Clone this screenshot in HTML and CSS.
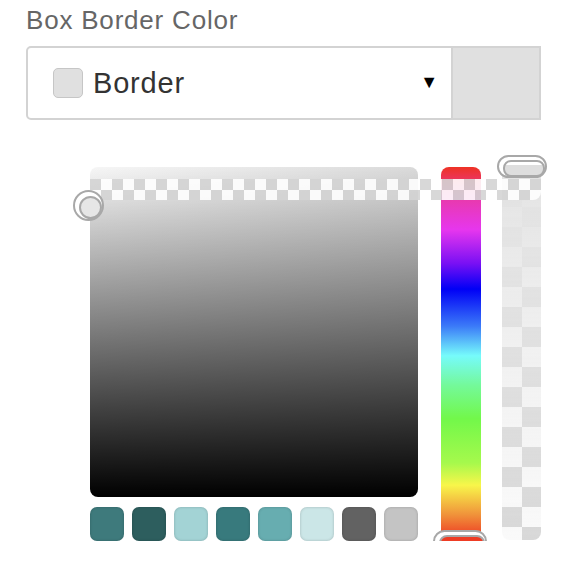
FILE: index.html
```html
<!DOCTYPE html>
<html lang="en">
<head>
    <meta charset="UTF-8">
    <meta name="viewport" content="width=device-width, initial-scale=1.0">
    <title>Box Border Color</title>
    <link rel="stylesheet" href="styles.css">
</head>
<body>
    <div class="field">
        <h2 class="label">Box Border Color</h2>

        <div class="color-input">
            <div class="select">
                <span class="chip"></span>
                <span class="select-text">Border</span>
                <span class="caret">&#9660;</span>
            </div>
            <div class="preview"></div>
        </div>

        <div class="picker">
            <div class="sv-col">
                <div class="sv"></div>
                <div class="swatches">
                    <span class="swatch s1"></span>
                    <span class="swatch s2"></span>
                    <span class="swatch s3"></span>
                    <span class="swatch s4"></span>
                    <span class="swatch s5"></span>
                    <span class="swatch s6"></span>
                    <span class="swatch s7"></span>
                    <span class="swatch s8"></span>
                </div>
            </div>
            <div class="hue"></div>
            <div class="alpha"></div>

            <div class="strip"></div>
            <div class="sv-handle"></div>
            <div class="pill hue-handle"></div>
            <div class="pill alpha-handle"></div>
        </div>
    </div>
</body>
</html>
```

FILE: styles.css
```css
* {
    margin: 0;
    padding: 0;
    box-sizing: border-box;
}

body {
    font-family: 'Liberation Sans', Arial, sans-serif;
    background: #fff;
    padding: 0 25px 0 26px;
}

.field {
    width: 515px;
}

.label {
    font-size: 26px;
    font-weight: normal;
    letter-spacing: 0.8px;
    color: #666;
    line-height: 30px;
    padding-top: 5px;
    margin-bottom: 11px;
}

/* select + preview */
.color-input {
    display: flex;
    height: 74px;
}

.select {
    flex: 1;
    display: flex;
    align-items: center;
    padding: 0 13px 0 25px;
    border: 2px solid #d3d3d3;
    border-right-width: 1px;
    border-radius: 5px 0 0 5px;
    background: #fff;
}

.chip {
    width: 30px;
    height: 30px;
    border: 1px solid #c6c6c6;
    border-radius: 5px;
    background: #e0e0e0;
    margin-right: 10px;
}

.select-text {
    flex: 1;
    font-size: 29px;
    letter-spacing: 0.8px;
    color: #333;
    padding-top: 1px;
}

.caret {
    font-size: 18px;
    color: #000;
    padding-bottom: 2px;
}

.preview {
    width: 89px;
    background: #e0e0e0;
    border: 2px solid #d3d3d3;
    border-left-width: 1px;
}

/* picker */
.picker {
    position: relative;
    display: flex;
    align-items: flex-start;
    margin-top: 47px;
    padding-left: 64px;
}

.sv {
    width: 328px;
    height: 330px;
    border-radius: 8px;
    background:
        linear-gradient(to bottom, rgba(0, 0, 0, 0) 0%, #000 100%),
        linear-gradient(to right, #f6f6f6, #dadada);
}

.swatches {
    display: flex;
    gap: 8px;
    margin-top: 10px;
}

.swatch {
    width: 34px;
    height: 34px;
    border-radius: 7px;
    box-shadow: inset 0 0 3px rgba(0, 0, 0, 0.2);
}

.s1 { background: #3e7a7c; }
.s2 { background: #2d5e5e; }
.s3 { background: #a3d3d5; }
.s4 { background: #387a7d; }
.s5 { background: #67adb0; }
.s6 { background: #cbe6e7; }
.s7 { background: #626262; }
.s8 { background: #c4c4c4; }

.hue {
    width: 40px;
    height: 370px;
    margin-left: 23px;
    border-radius: 8px 8px 0 0;
    background: linear-gradient(to bottom,
        #ee3224 0%,
        #e83aa8 8%,
        #e636ee 17%,
        #7a10f4 26%,
        #0000f6 33%,
        #3b7af8 43%,
        #76fbfb 51%,
        #74f99a 59%,
        #72f84a 68%,
        #a6f94c 80%,
        #f8f64a 86%,
        #f0923a 94%,
        #ee3c24 100%);
}

.alpha {
    width: 40px;
    height: 373px;
    margin-left: 21px;
    border-radius: 0 0 8px 8px;
    background:
        linear-gradient(to bottom, #e2e2e2 0%, rgba(230, 230, 230, 0.85) 20%, rgba(232, 232, 232, 0.45) 55%, rgba(232, 232, 232, 0) 100%),
        conic-gradient(#d8d8d8 0 25%, #fafafa 0 50%, #d8d8d8 0 75%, #fafafa 0) 0 0 / 40px 40px;
}

/* overlays */
.strip {
    position: absolute;
    left: 64px;
    top: 12px;
    width: 451px;
    height: 21px;
    border-radius: 0 0 8px 0;
    opacity: 0.9;
    background: conic-gradient(#fff 0 25%, #d4d4d4 0 50%, #fff 0 75%, #d4d4d4 0) 0 0 / 22px 22px;
}

.sv-handle {
    position: absolute;
    left: 47px;
    top: 23px;
    width: 31px;
    height: 31px;
    border-radius: 50%;
    border: 2px solid #a8a8a8;
    background: #fff;
    padding: 4px;
}

.sv-handle::after {
    content: "";
    display: block;
    width: 100%;
    height: 100%;
    border-radius: 50%;
    border: 2px solid #a8a8a8;
    background: #e6e6e6;
}

.pill {
    position: absolute;
    border: 2px solid #a8a8a8;
    border-radius: 12px;
    background: #fff;
    padding: 3px 4px;
}

.pill::after {
    content: "";
    display: block;
    width: 100%;
    height: 100%;
    border-radius: 8px;
    border: 2px solid #a8a8a8;
}

.hue-handle {
    left: 407px;
    top: 363px;
    width: 54px;
    height: 23px;
}

.hue-handle::after {
    background: linear-gradient(to bottom, #ee3c24 0 30%, #fff 30%);
}

.alpha-handle {
    left: 471px;
    top: -12px;
    width: 50px;
    height: 23px;
}

.alpha-handle::after {
    background: linear-gradient(to bottom, #fff 0 25%, #dedede 25%);
}
```
